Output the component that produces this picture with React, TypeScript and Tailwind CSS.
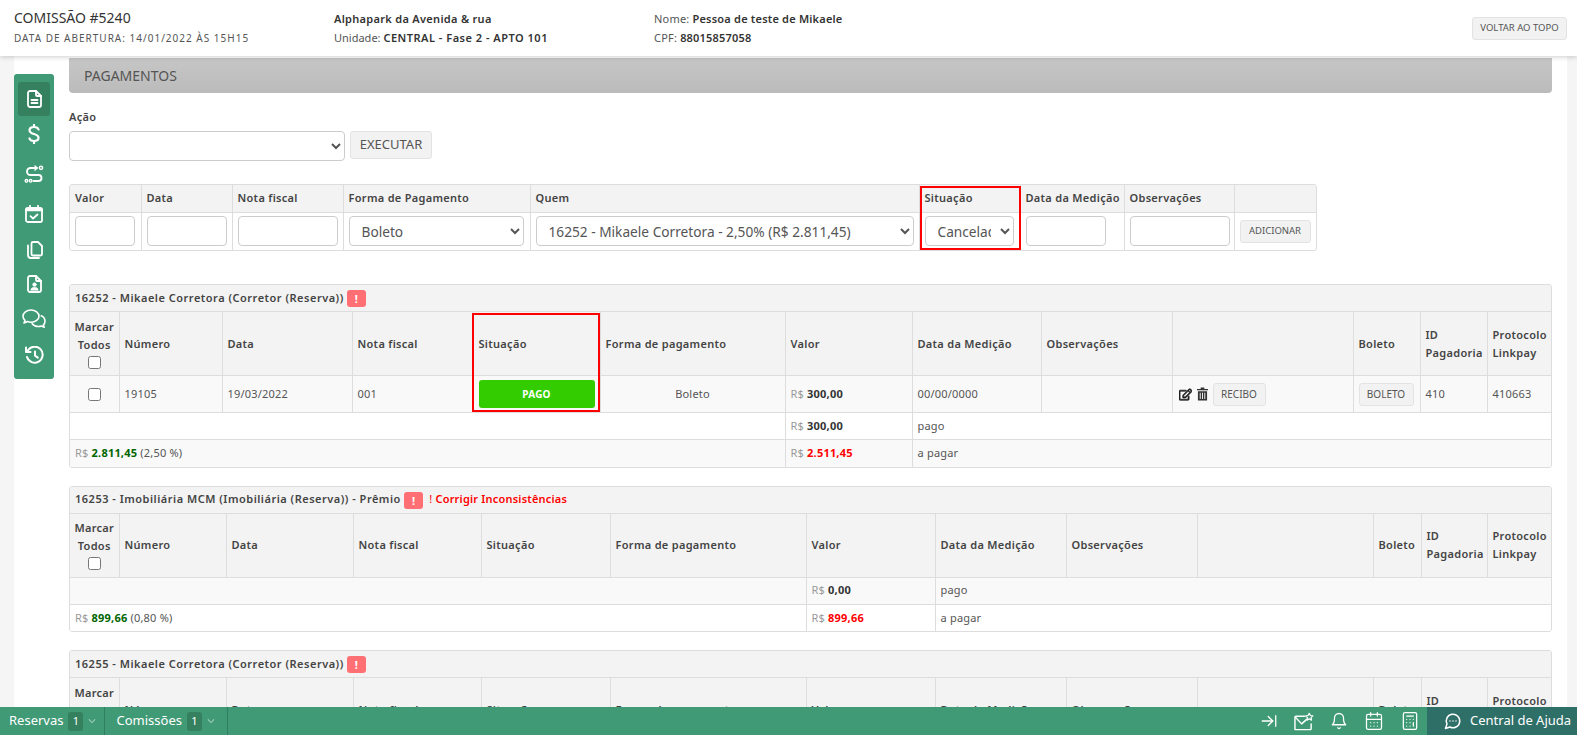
import React from "react";
import { FaRegEdit } from "react-icons/fa";
import { BsChevronDown } from "react-icons/bs";
import { LuArrowRightToLine, LuBell, LuCalendarDays, LuCalculator, LuMessageCircleMore } from "react-icons/lu";

const cellB = "border-r border-b border-[#dddddd] last:border-r-0";
const th = `${cellB} px-[5px] text-left align-middle font-semibold leading-[18px] text-[#444444] tracking-[0.3px]`;
const td = `${cellB} px-[5px] align-middle text-[#555555] tracking-[0.2px]`;
const rowLast = "[&:last-child>td]:border-b-0";
const field = "block h-[30px] rounded-[4px] border border-[#cccccc] bg-white text-[13.7px] tracking-normal text-[#555555]";
const btn = "rounded-[3px] border border-[#e3e3e3] bg-[#f2f2f2] text-[#555555] uppercase tracking-normal";

function Ic({ w, h, vb, children }: { w: string; h: string; vb: string; children: React.ReactNode }) {
  return (
    <svg viewBox={vb} className={`${w} ${h}`} fill="none" stroke="white" strokeWidth="1.8" strokeLinecap="round" strokeLinejoin="round">
      {children}
    </svg>
  );
}

const IconDoc = () => (
  <Ic w="w-[15px]" h="h-[18px]" vb="0 0 15 18">
    <path d="M3 1h6l5 5v9a2 2 0 0 1-2 2H3a2 2 0 0 1-2-2V3a2 2 0 0 1 2-2z" />
    <path d="M9 1v4a1 1 0 0 0 1 1h4" />
    <path d="M4.5 10h6M4.5 13h6" />
  </Ic>
);
const IconDollar = () => (
  <Ic w="w-[12px]" h="h-[20px]" vb="0 0 12 20">
    <path d="M10.5 5.5C10 4 8.5 3 6 3 3.5 3 1.5 4.2 1.5 6.2 1.5 8.5 3.5 9.2 6 10c2.5.8 4.5 1.5 4.5 3.8C10.5 15.8 8.5 17 6 17c-2.5 0-4-1-4.5-2.5M6 .8V3M6 17v2.2" strokeWidth="2.2" />
  </Ic>
);
const IconRoute = () => (
  <Ic w="w-[20px]" h="h-[18px]" vb="0 0 20 18">
    <path d="M13 3H6.5a3.5 3.5 0 0 0 0 7h8a3 3 0 0 1 0 6H9.5" strokeWidth="1.9" />
    <path d="M11 1l2 2-2 2" strokeWidth="1.5" />
    <circle cx="17" cy="2.8" r="1.6" strokeWidth="1.5" />
    <circle cx="2.5" cy="15.8" r="1.3" strokeWidth="1.4" />
    <circle cx="6.6" cy="15.8" r="1.3" strokeWidth="1.4" />
  </Ic>
);
const IconCalendar = () => (
  <Ic w="w-[18px]" h="h-[18px]" vb="0 0 18 18">
    <rect x="1" y="3" width="16" height="14" rx="1.8" />
    <path d="M1 5h16" strokeWidth="2.6" />
    <path d="M5 .8V3M13 .8V3" />
    <path d="M5.5 11.2l2.5 2.3 4.5-4" />
  </Ic>
);
const IconCopy = () => (
  <Ic w="w-[17px]" h="h-[18px]" vb="0 0 17 18">
    <path d="M7 1h5l4 4v8a1.5 1.5 0 0 1-1.5 1.5H7A1.5 1.5 0 0 1 5.5 13V2.5A1.5 1.5 0 0 1 7 1z" />
    <path d="M2 4.5V14a3 3 0 0 0 3 3h8" />
  </Ic>
);
const IconFilePerson = () => (
  <Ic w="w-[15px]" h="h-[18px]" vb="0 0 15 18">
    <path d="M3 1h6l5 5v9a2 2 0 0 1-2 2H3a2 2 0 0 1-2-2V3a2 2 0 0 1 2-2z" />
    <path d="M9 1v4a1 1 0 0 0 1 1h4" />
    <circle cx="7.5" cy="9.6" r="1.8" fill="white" strokeWidth="0.6" />
    <path d="M3.8 15c0-1.8 1.8-2.8 3.7-2.8s3.7 1 3.7 2.8z" fill="white" strokeWidth="0.6" />
  </Ic>
);
const IconComments = () => (
  <Ic w="w-[24px]" h="h-[19px]" vb="0 0 24 19">
    <path d="M9 1C4.6 1 1 3.8 1 7.2c0 1.6.8 3 2 4.1L2 14l3.5-1.4c1.1.4 2.2.6 3.5.6 4.4 0 8-2.8 8-6S13.4 1 9 1z" strokeWidth="1.6" />
    <path d="M19.2 6.8c2.4 1 3.8 3.2 3.8 5.4 0 1.4-.6 2.7-1.6 3.7l.8 2.3-2.8-1.2c-1 .4-2 .5-3 .5-2.6 0-5-1.1-6.2-2.8" strokeWidth="1.6" />
  </Ic>
);
const IconHistory = () => (
  <Ic w="w-[20px]" h="h-[18px]" vb="0 0 20 18">
    <path d="M4 4.2A8 8 0 1 1 3 11" strokeWidth="2" />
    <path d="M2 1.5V6h4.5" strokeWidth="2" />
    <path d="M11 5.5V9.6l2.8 2" strokeWidth="2" />
  </Ic>
);

function Money({ v, cls = "text-[#333333]" }: { v: string; cls?: string }) {
  return (
    <span>
      <span className="text-[#999999]">R$ </span>
      <b className={`font-bold ${cls}`}>{v}</b>
    </span>
  );
}

function Alert() {
  return (
    <span className="inline-flex h-[17px] w-[19px] items-center justify-center rounded-[3px] bg-[#ff6f73] align-middle text-[11px] font-bold leading-none text-white">!</span>
  );
}

function Trash() {
  return (
    <svg viewBox="0 0 12 14" className="h-[14px] w-[11px]" fill="#333333">
      <path d="M4 0h4v1.5h4V3H0V1.5h4z" />
      <path d="M1 4h10v10H1zM3 5.5v7h1v-7zM5.5 5.5v7h1v-7zM8 5.5v7h1v-7z" fillRule="evenodd" />
    </svg>
  );
}

function MailStar() {
  return (
    <svg viewBox="0 0 21 19" className="h-[19px] w-[20px]" fill="none" stroke="white" strokeWidth="1.5" strokeLinecap="round" strokeLinejoin="round">
      <path d="M11 4H2a1 1 0 0 0-1 1v13h16a1 1 0 0 0 1-1v-5" />
      <path d="M1.5 5l6.5 7 5-4.5" />
      <path d="M16 1l1.2 2.2 2.6.4-1.9 1.8.5 2.6L16 6.8l-2.4 1.2.5-2.6-1.9-1.8 2.6-.4z" strokeWidth="1.3" />
    </svg>
  );
}

function FilterTable() {
  const widths = ["w-[71px]", "w-[91px]", "w-[111px]", "w-[187px]", "w-[389px]", "w-[101px]", "w-[104px]", "w-[110px]", "w-[82px]"];
  const heads = ["Valor", "Data", "Nota fiscal", "Forma de Pagamento", "Quem", "Situação", "Data da Medição", "Observações", ""];
  return (
    <div className="relative mt-[23px] w-[1248px] overflow-hidden rounded-[3px] border border-[#dddddd]">
      <table className="w-full table-fixed border-collapse">
        <colgroup>{widths.map((w, i) => <col key={i} className={w} />)}</colgroup>
        <thead>
          <tr className="h-[27px] bg-[#f3f3f3]">
            {heads.map((h, i) => <th key={i} className={`${th} whitespace-nowrap`}>{h}</th>)}
          </tr>
        </thead>
        <tbody>
          <tr className={`h-[38px] ${rowLast}`}>
            <td className={td}><input className={`${field} w-[60px]`} /></td>
            <td className={td}><input className={`${field} w-[80px]`} /></td>
            <td className={td}><input className={`${field} w-[100px]`} /></td>
            <td className={td}><select className={`${field} w-[175px] pl-[8px]`} defaultValue="Boleto"><option>Boleto</option></select></td>
            <td className={td}><select className={`${field} w-[378px] pl-[8px]`} defaultValue="q"><option value="q">16252 - Mikaele Corretora - 2,50% (R$ 2.811,45)</option></select></td>
            <td className={td}><select className={`${field} w-[89px] pl-[8px] pr-[6px]`} defaultValue="Cancelado"><option>Cancelado</option></select></td>
            <td className={td}><input className={`${field} w-[80px]`} /></td>
            <td className={td}><input className={`${field} w-[100px]`} /></td>
            <td className={td}><button className={`${btn} h-[23px] w-[71px] text-[9.5px]`}>Adicionar</button></td>
          </tr>
        </tbody>
      </table>
      <div className="pointer-events-none absolute left-[850px] top-[1px] h-[64px] w-[101px] border-2 border-[#ff0000]" />
    </div>
  );
}

function Marcar() {
  return (
    <div className="-mt-[1px] flex flex-col items-center">
      <span>Marcar</span>
      <span>Todos</span>
      <input type="checkbox" className="mt-[2px] h-[13px] w-[13px]" />
    </div>
  );
}

const col1 = ["w-[49px]", "w-[103px]", "w-[130px]", "w-[121px]", "w-[127px]", "w-[185px]", "w-[127px]", "w-[129px]", "w-[131px]", "w-[181px]", "w-[67px]", "w-[67px]", "w-[64px]"];
const col2 = ["w-[49px]", "w-[107px]", "w-[127px]", "w-[128px]", "w-[129px]", "w-[196px]", "w-[129px]", "w-[131px]", "w-[131px]", "w-[176px]", "w-[48px]", "w-[66px]", "w-[64px]"];

function Cols({ cols }: { cols: string[] }) {
  return <colgroup>{cols.map((w, i) => <col key={i} className={w} />)}</colgroup>;
}

function HeadRow() {
  const labels = ["Número", "Data", "Nota fiscal", "Situação", "Forma de pagamento", "Valor", "Data da Medição", "Observações", "", "Boleto"];
  return (
    <tr className="h-[64px] bg-[#f3f3f3]">
      <th className={th}><Marcar /></th>
      {labels.map((l, i) => <th key={i} className={`${th} whitespace-nowrap`}>{l}</th>)}
      <th className={th}>ID Pagadoria</th>
      <th className={th}>Protocolo Linkpay</th>
    </tr>
  );
}

function Title({ children }: { children: React.ReactNode }) {
  return (
    <tr className="h-[26.5px] bg-[#f3f3f3]">
      <th colSpan={13} className={`${th} whitespace-nowrap !tracking-[0.5px]`}>{children}</th>
    </tr>
  );
}

function Totals({ pago, total, pct, falta, striped }: { pago: string; total: string; pct: string; falta: string; striped: "first" | "second" }) {
  return (
    <>
      <tr className={`h-[27px] ${striped === "first" ? "bg-[#f9f9f9]" : "bg-white"}`}>
        <td colSpan={6} className={td} />
        <td className={td}><Money v={pago} /></td>
        <td colSpan={6} className={td}>pago</td>
      </tr>
      <tr className={`h-[27px] ${rowLast} ${striped === "first" ? "bg-white" : "bg-[#f9f9f9]"}`}>
        <td colSpan={6} className={td}>
          <Money v={total} cls="text-[#006600]" /> <span>({pct} %)</span>
        </td>
        <td className={td}><Money v={falta} cls="text-[#ff0000]" /></td>
        <td colSpan={6} className={td}>a pagar</td>
      </tr>
    </>
  );
}

function Section1() {
  return (
    <div className="relative mt-[33px] w-[1483px] overflow-hidden rounded-[3px] border border-[#dddddd]">
      <table className="w-full table-fixed border-collapse">
        <Cols cols={col1} />
        <thead>
          <Title>16252 - Mikaele Corretora (Corretor (Reserva)) <Alert /></Title>
          <HeadRow />
        </thead>
        <tbody>
          <tr className="h-[37px] bg-[#f9f9f9]">
            <td className={`${td} text-center`}><input type="checkbox" className="h-[13px] w-[13px] align-middle" /></td>
            <td className={td}>19105</td>
            <td className={td}>19/03/2022</td>
            <td className={td}>001</td>
            <td className={td}>
              <div className="flex h-[28px] items-center justify-center rounded-[3px] bg-[#33cc00] text-[10px] font-bold text-white">PAGO</div>
            </td>
            <td className={`${td} text-center`}>Boleto</td>
            <td className={td}><Money v="300,00" /></td>
            <td className={td}>00/00/0000</td>
            <td className={td} />
            <td className={td}>
              <div className="flex items-center">
                <FaRegEdit className="ml-[1px] h-[13px] w-[13px] text-[#222222]" stroke="currentColor" strokeWidth={30} />
                <span className="ml-[5px]"><Trash /></span>
                <button className={`${btn} ml-[5px] h-[23px] w-[53px] text-[10px]`}>Recibo</button>
              </div>
            </td>
            <td className={td}><button className={`${btn} h-[23px] w-[55px] text-[10px]`}>Boleto</button></td>
            <td className={td}>410</td>
            <td className={td}>410663</td>
          </tr>
          <Totals pago="300,00" total="2.811,45" pct="2,50" falta="2.511,45" striped="second" />
        </tbody>
      </table>
      <div className="pointer-events-none absolute left-[402px] top-[28px] h-[99px] w-[128px] border-2 border-[#ff0000]" />
    </div>
  );
}

function Section2() {
  return (
    <div className="mt-[18px] w-[1483px] overflow-hidden rounded-[3px] border border-[#dddddd]">
      <table className="w-full table-fixed border-collapse">
        <Cols cols={col2} />
        <thead>
          <Title>
            16253 - Imobiliária MCM (Imobiliária (Reserva)) - Prêmio <Alert />
            <span className="ml-[6px] font-semibold tracking-[0.2px] text-[#ff0000]"><span className="font-normal">!</span> Corrigir Inconsistências</span>
          </Title>
          <HeadRow />
        </thead>
        <tbody>
          <Totals pago="0,00" total="899,66" pct="0,80" falta="899,66" striped="first" />
        </tbody>
      </table>
    </div>
  );
}

function Section3() {
  return (
    <div className="mt-[18px] w-[1483px] overflow-hidden rounded-[3px] border border-[#dddddd]">
      <table className="w-full table-fixed border-collapse">
        <Cols cols={col2} />
        <thead>
          <Title>16255 - Mikaele Corretora (Corretor (Reserva)) <Alert /></Title>
          <HeadRow />
        </thead>
      </table>
    </div>
  );
}

function Tab({ label, pr }: { label: string; pr: string }) {
  return (
    <div className={`flex h-full items-center gap-[5px] border-r border-[#2f8062] ${pr}`}>
      <span>{label}</span>
      <span className="flex h-[19px] w-[15px] items-center justify-center rounded-[3px] bg-[#35815f] text-[11px]">1</span>
      <BsChevronDown className="h-[8px] w-[8px]" />
    </div>
  );
}

export default function App() {
  const side: [React.FC, string][] = [
    [IconDollar, "h-[36px]"],
    [IconRoute, "h-[44px]"],
    [IconCalendar, "h-[36px]"],
    [IconCopy, "h-[35px]"],
    [IconFilePerson, "h-[33px]"],
    [IconComments, "h-[37px]"],
    [IconHistory, "h-[35px]"],
  ];
  return (
    <div className="flex h-screen flex-col overflow-hidden bg-[#f5f5f5] text-[11px] tracking-[0.3px] text-[#555555] [font-family:'Noto_Sans',sans-serif]">
      <header className="relative z-10 flex h-[56px] shrink-0 bg-white pl-[14px] pr-[10px] shadow-[0_1px_5px_rgba(0,0,0,0.2)]">
        <div className="w-[320px] pt-[9px]">
          <div className="text-[14px] leading-[18px] tracking-normal text-[#333333]">COMISSÃO #5240</div>
          <div className="mt-[3px] text-[10px] leading-[16px] tracking-[1px]">DATA DE ABERTURA: 14/01/2022 ÀS 15H15</div>
        </div>
        <div className="w-[320px] pt-[10px] leading-[18px]">
          <div className="font-semibold text-[#333333]">Alphapark da Avenida &amp; rua</div>
          <div className="mt-[1px] tracking-normal">Unidade: <b className="font-semibold tracking-[0.5px] text-[#333333]">CENTRAL - Fase 2 - APTO 101</b></div>
        </div>
        <div className="flex-1 pt-[10px] leading-[18px] tracking-[0.2px]">
          <div>Nome: <b className="font-semibold text-[#333333]">Pessoa de teste de Mikaele</b></div>
          <div className="mt-[1px]">CPF: <b className="font-semibold text-[#333333]">88015857058</b></div>
        </div>
        <button className={`${btn} mt-[17px] h-[23px] w-[95px] text-[9.5px]`}>Voltar ao topo</button>
      </header>

      <div className="flex min-h-0 flex-1 overflow-hidden pl-[14px] pr-[10px]">
        <div className="flex min-w-0 flex-1 overflow-hidden bg-white">
          <nav className="mt-[18px] flex h-[305px] w-[40px] shrink-0 flex-col items-center rounded-[3px] bg-[#3f9a75] pt-[8px] text-white">
            <div className="flex h-[34px] w-[32px] items-center justify-center rounded-[3px] bg-[#35815f]">
              <IconDoc />
            </div>
            {side.map(([I, h], i) => (
              <div key={i} className={`flex w-[32px] items-center justify-center ${h}`}>
                <I />
              </div>
            ))}
          </nav>
          <main className="ml-[15px] mr-[15px] min-w-0 flex-1">
            <div className="mt-[2px] flex h-[35px] items-center rounded-b-[4px] bg-gradient-to-b from-[#c6c6c6] to-[#bbbbbb] pl-[15px] text-[14px] tracking-normal text-[#555555]">PAGAMENTOS</div>
            <label className="mt-[16px] block font-semibold leading-[16px] text-[#444444]">Ação</label>
            <div className="mt-[6px] flex items-start gap-[5px]">
              <select className={`${field} w-[276px]`} defaultValue=""><option value="" /></select>
              <button className={`${btn} h-[28px] w-[82px] text-[13px]`}>Executar</button>
            </div>
            <FilterTable />
            <Section1 />
            <Section2 />
            <Section3 />
          </main>
        </div>
      </div>

      <footer className="relative z-10 flex h-[28px] shrink-0 items-center bg-[#3f9a75] text-[13px] tracking-normal text-white">
        <div className="flex h-full items-center pl-[9px]">
          <Tab label="Reservas" pr="pr-[8px]" />
        </div>
        <div className="flex h-full items-center pl-[11px]">
          <Tab label="Comissões" pr="pr-[12px]" />
        </div>
        <div className="ml-auto flex items-center gap-[16px] pr-[7px]">
          <LuArrowRightToLine className="h-[18px] w-[18px]" strokeWidth={1.7} />
          <MailStar />
          <LuBell className="h-[18px] w-[18px]" strokeWidth={1.7} />
          <LuCalendarDays className="h-[20px] w-[20px]" strokeWidth={1.5} />
          <LuCalculator className="h-[20px] w-[20px]" strokeWidth={1.5} />
        </div>
        <div className="flex h-full w-[150px] items-center gap-[8px] bg-[#2e6f68] pl-[17px]">
          <LuMessageCircleMore className="h-[18px] w-[18px] shrink-0" />
          <span className="whitespace-nowrap">Central de Ajuda</span>
        </div>
      </footer>
    </div>
  );
}
